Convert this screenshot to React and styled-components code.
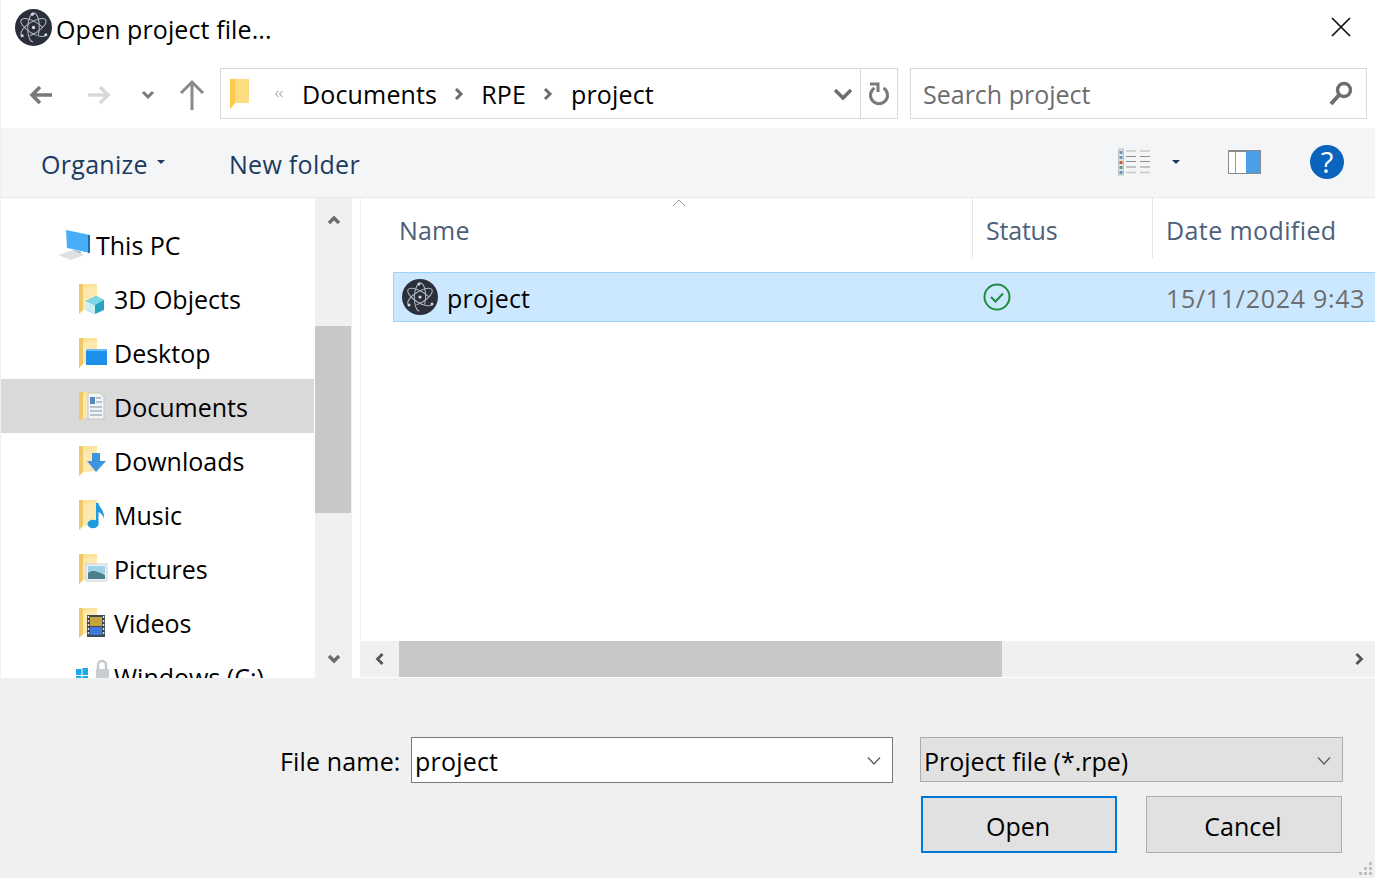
import React from "react";
import styled, { createGlobalStyle } from "styled-components";

const GlobalStyle = createGlobalStyle`
  html, body {
    margin: 0;
    padding: 0;
    background: #fff;
  }
  * {
    box-sizing: border-box;
  }
`;

const Dialog = styled.div`
  width: 1375px;
  height: 878px;
  position: relative;
  overflow: hidden;
  display: flex;
  flex-direction: column;
  background: #fff;
  color: #000;
  font-family: "Open Sans", "Noto Sans", sans-serif;
  font-size: 25px;
  border-left: 1px solid #f0f0f0;
`;

const Glyph = styled.svg`
  flex: none;
  display: block;
  margin-right: ${(p) => p.$gap || 0}px;
`;

const TitleBar = styled.div`
  height: 60px;
  flex: none;
  display: flex;
  align-items: center;
  padding: 0 24px 6px 14px;
`;

const Title = styled.div`
  margin-left: 4px;
  margin-top: 4px;
  flex: 1;
  line-height: 34px;
  letter-spacing: 0.1px;
`;

const NavBar = styled.div`
  height: 68px;
  flex: none;
  display: flex;
  align-items: flex-start;
  padding-top: 8px;
  padding-right: 8px;
`;

const NavButtons = styled.div`
  width: 219px;
  height: 53px;
  flex: none;
  display: flex;
  align-items: center;
  padding-left: 28px;
`;

const Address = styled.div`
  width: 678px;
  height: 51px;
  flex: none;
  display: flex;
  align-items: center;
  border: 1px solid #d9d9dd;
  padding-left: 8px;
`;

const Crumb = styled.span`
  line-height: 34px;
  letter-spacing: 0.15px;
`;

const CrumbSep = styled.svg`
  flex: none;
  margin: 0 ${(p) => p.$right}px 0 ${(p) => p.$left}px;
`;

const AddressEnd = styled.div`
  margin-left: auto;
  height: 100%;
  display: flex;
  align-items: center;
`;

const RefreshBox = styled.div`
  width: 37px;
  height: 100%;
  margin-left: 7px;
  border-left: 1px solid #d9d9dd;
  display: flex;
  align-items: center;
  justify-content: center;
`;

const SearchBox = styled.div`
  margin-left: 12px;
  flex: 1;
  height: 51px;
  display: flex;
  align-items: center;
  justify-content: space-between;
  border: 1px solid #d9d9dd;
  padding: 0 13px 0 12px;
  color: #6d6d6d;
`;

const CommandBar = styled.div`
  height: 70px;
  flex: none;
  display: flex;
  align-items: center;
  background: #f3f5f7;
  border-bottom: 1px solid #e8eaed;
  padding-left: 40px;
  padding-right: 31px;
  color: #1e3a5f;
`;

const CommandText = styled.span`
  line-height: 34px;
  letter-spacing: 0.3px;
  margin-top: 2px;
  margin-left: ${(p) => p.$left || 0}px;
`;

const Caret = styled.span`
  flex: none;
  width: 0;
  height: 0;
  border-left: 4px solid transparent;
  border-right: 4px solid transparent;
  border-top: 4px solid #1e3a5f;
  margin: ${(p) => p.$margin};
`;

const CommandRight = styled.div`
  margin-left: auto;
  margin-bottom: 2px;
  display: flex;
  align-items: center;
`;

const HelpButton = styled.div`
  width: 34px;
  height: 34px;
  border-radius: 50%;
  background: #0a63bd;
  color: #fff;
  font-size: 29px;
  line-height: 34px;
  text-align: center;
  margin-left: 49px;
`;

const Main = styled.div`
  height: 480px;
  flex: none;
  display: flex;
`;

const SidePane = styled.div`
  width: 313px;
  margin-right: 1px;
  flex: none;
  padding-top: 19px;
  overflow: hidden;
`;

const TreeRow = styled.div`
  height: 54px;
  flex: none;
  display: flex;
  align-items: center;
  padding-left: ${(p) => p.$indent}px;
  background: ${(p) => (p.$selected ? "#d9d9d9" : "transparent")};
`;

const TreeLabel = styled.span`
  line-height: 34px;
  margin-top: 2px;
  margin-left: ${(p) => p.$gap}px;
`;

const VScroll = styled.div`
  width: 37px;
  flex: none;
  background: #f0f0f0;
  display: flex;
  flex-direction: column;
`;

const ScrollEnd = styled.div`
  height: ${(p) => (p.$bottom ? 38 : 44)}px;
  margin-top: ${(p) => (p.$bottom ? "auto" : 0)};
  flex: none;
  display: flex;
  align-items: center;
  justify-content: center;
`;

const VThumb = styled.div`
  height: 187px;
  margin-top: 84px;
  background: #c8c8c8;
  margin-right: 1px;
`;

const ListPane = styled.div`
  flex: 1;
  min-width: 0;
  margin-left: 8px;
  border-left: 1px solid #f0f0f0;
  display: flex;
  flex-direction: column;
  position: relative;
`;

const SortMark = styled.svg`
  position: absolute;
  left: 311px;
  top: 1px;
`;

const ListHeader = styled.div`
  height: 60px;
  flex: none;
  display: grid;
  grid-template-columns: 611px 180px 1fr;
  color: #4c607a;
`;

const HeaderCell = styled.div`
  display: flex;
  align-items: center;
  padding-left: ${(p) => p.$pad}px;
  padding-top: 4px;
  border-left: ${(p) => (p.$divider ? "1px solid #e5e5e5" : "none")};
  line-height: 34px;
  letter-spacing: ${(p) => p.$spacing}px;
`;

const FileRow = styled.div`
  height: 50px;
  margin-top: 14px;
  margin-left: 32px;
  flex: none;
  display: grid;
  grid-template-columns: 580px 180px 1fr;
  align-items: center;
  background: #cce8ff;
  border: 1px solid #99d1ff;
  border-right: none;
`;

const FileName = styled.div`
  display: flex;
  align-items: center;
  padding-left: 8px;
  gap: 9px;
  letter-spacing: 0.2px;
`;

const FileNameText = styled.span`
  margin-top: 2px;
`;

const FileStatus = styled.div`
  display: flex;
  align-items: center;
  padding-left: 9px;
  margin-top: -1px;
`;

const FileDate = styled.div`
  color: #6d6d6d;
  padding-left: 12px;
  padding-top: 2px;
  white-space: nowrap;
  line-height: 34px;
  letter-spacing: 0.7px;
`;

const HScroll = styled.div`
  height: 36px;
  margin-top: auto;
  margin-bottom: 1px;
  flex: none;
  background: #f0f0f0;
  display: flex;
  align-items: stretch;
`;

const HEnd = styled.div`
  width: ${(p) => (p.$right ? 32 : 38)}px;
  flex: none;
  display: flex;
  align-items: center;
  justify-content: center;
  margin-left: ${(p) => (p.$right ? "auto" : 0)};
`;

const HThumb = styled.div`
  width: 603px;
  background: #c8c8c8;
`;

const Footer = styled.div`
  flex: 1;
  background: #f0f0f0;
  padding: 59px 33px 0 279px;
  display: grid;
  grid-template-columns: 132px 482px 28px 196px 29px 196px;
  grid-template-rows: 46px 57px;
  row-gap: 13px;
  margin-left: -1px;
`;

const FieldLabel = styled.div`
  display: flex;
  align-items: center;
  padding-top: 2px;
  line-height: 34px;
  letter-spacing: 0.15px;
  margin-left: 1px;
`;

const ComboInput = styled.div`
  display: flex;
  align-items: center;
  justify-content: space-between;
  background: #fff;
  border: 1px solid #7a7a7a;
  padding: 2px 10px 0 3px;
  line-height: 34px;
  letter-spacing: 0.2px;
`;

const TypeSelect = styled.div`
  grid-column: 4 / 7;
  margin-left: -1px;
  margin-right: -1px;
  margin-bottom: 1px;
  display: flex;
  align-items: center;
  justify-content: space-between;
  background: #e1e1e1;
  border: 1px solid #adadad;
  padding: 2px 10px 0 3px;
  line-height: 34px;
`;

const DialogButton = styled.div`
  grid-row: 2;
  grid-column: ${(p) => p.$col};
  display: flex;
  align-items: center;
  justify-content: center;
  background: #e1e1e1;
  border: ${(p) => (p.$primary ? "2px solid #0078d7" : "1px solid #adadad")};
  padding: 2px 2px 0 0;
  line-height: 34px;
`;

const Grip = styled.svg`
  position: absolute;
  right: 1px;
  bottom: 1px;
`;

const Atom = ({ size }) => (
  <Glyph width={size} height={size} viewBox="0 0 36 36">
    <circle cx="18" cy="18" r="18" fill="#2b2e3b" />
    <g fill="none" stroke="#b4bbc3" strokeWidth="1" strokeDasharray="86 14">
      <ellipse cx="18" cy="18" rx="14" ry="5.6" transform="rotate(32 18 18)" pathLength="100" />
      <ellipse cx="18" cy="18" rx="14" ry="5.6" transform="rotate(92 18 18)" pathLength="100" />
      <ellipse cx="18" cy="18" rx="14" ry="5.6" transform="rotate(148 18 18)" pathLength="100" />
    </g>
    <g fill="#d5dade">
      <circle cx="18" cy="18" r="1.6" />
      <circle cx="17" cy="5" r="1.5" />
      <circle cx="7" cy="26" r="1.5" />
      <circle cx="30" cy="25" r="1.5" />
    </g>
  </Glyph>
);

const Chevron = ({ dir = "down", color = "#6d6d6d", size = 16, weight = 3.4 }) => {
  const pts = {
    down: "3,5 8,10 13,5",
    up: "3,11 8,6 13,11",
    left: "10.5,3 5.5,8 10.5,13",
    right: "5.5,3 10.5,8 5.5,13",
  }[dir];
  return (
    <Glyph width={size} height={size} viewBox="0 0 16 16">
      <polyline points={pts} fill="none" stroke={color} strokeWidth={weight} />
    </Glyph>
  );
};

const ThinChevron = () => (
  <Glyph width="16" height="10" viewBox="0 0 16 10">
    <polyline points="2,1.5 8,8 14,1.5" fill="none" stroke="#5a5a5a" strokeWidth="1.3" />
  </Glyph>
);

const CrumbArrow = ({ left, right }) => (
  <CrumbSep width="12" height="14" viewBox="0 0 12 14" $left={left} $right={right}>
    <polyline points="3,2 8,7 3,12" fill="none" stroke="#6d6d6d" strokeWidth="3" />
  </CrumbSep>
);

// tall explorer folder, the overlay for each library is passed as children
const Folder = ({ children }) => (
  <Glyph width="31" height="34" viewBox="0 0 31 34">
    <path d="M1 3 L19 3 L19 28 L6 28 L1 33 Z" fill="#fbe29a" />
    <path d="M1 3 L5 3 L5 29 L1 33 Z" fill="#f0c869" />
    <path d="M5 8 L19 5 L19 28 L5 29 Z" fill="#fde8ad" />
    {children}
  </Glyph>
);

const treeItems = [
  {
    label: "3D Objects",
    overlay: (
      <g>
        <path d="M8 20 L18 15 L26 19 L26 29 L17 33 L8 29 Z" fill="#27a4c4" />
        <path d="M8 20 L17 24 L17 33 L8 29 Z" fill="#c8f0f0" />
        <path d="M8 20 L18 15 L26 19 L17 24 Z" fill="#7cd6e6" />
      </g>
    ),
  },
  {
    label: "Desktop",
    overlay: (
      <g>
        <rect x="8" y="14" width="21" height="16" fill="#1e90ec" />
        <rect x="8" y="14" width="21" height="2" fill="#6cbcf4" />
      </g>
    ),
  },
  {
    label: "Documents",
    selected: true,
    overlay: (
      <g>
        <path d="M10 4 L22 4 L26 8 L26 30 L10 30 Z" fill="#f2f4f6" stroke="#b8c0c8" strokeWidth="0.8" />
        <rect x="12" y="8" width="5" height="7" fill="#5587bd" />
        <path d="M18 9 h5 M18 13 h6 M12 18 h12 M12 22 h12 M12 26 h12" stroke="#7f93a8" strokeWidth="1.2" />
      </g>
    ),
  },
  {
    label: "Downloads",
    overlay: (
      <path d="M14 10 L22 10 L22 18 L28 18 L18 29 L9 18 L14 18 Z" fill="#3e94de" />
    ),
  },
  {
    label: "Music",
    overlay: (
      <g fill="#1f9be0">
        <ellipse cx="15" cy="27" rx="5.5" ry="4.2" />
        <path d="M18 6 L20.5 6 C21 11 27 13 26 22 C25 18 23 16 20.5 15 L20.5 27 L18 27 Z" />
      </g>
    ),
  },
  {
    label: "Pictures",
    overlay: (
      <g>
        <rect x="8" y="13" width="21" height="17" fill="#eef1f3" stroke="#c5ccd2" strokeWidth="0.8" />
        <rect x="10" y="15" width="17" height="8" fill="#9fd3ea" />
        <path d="M10 22 C15 18 20 21 27 24 L27 28 L10 28 Z" fill="#4f7f8a" />
      </g>
    ),
  },
  {
    label: "Videos",
    overlay: (
      <g>
        <rect x="9" y="10" width="18" height="22" fill="#3d4a52" />
        <rect x="12" y="12" width="12" height="9" fill="#c4a43c" />
        <rect x="12" y="22" width="12" height="8" fill="#3f78d8" />
        <path d="M10.5 11 v20 M25.5 11 v20" stroke="#dfe5e8" strokeWidth="1.4" strokeDasharray="2 2" />
      </g>
    ),
  },
];

const App = () => {
  return (
    <>
      <GlobalStyle />
      <Dialog>
        <TitleBar>
          <Atom size={37} />
          <Title>Open project file...</Title>
          <Glyph width="20" height="20" viewBox="0 0 20 20">
            <path d="M1 1 L19 19 M19 1 L1 19" stroke="#111" strokeWidth="1.7" />
          </Glyph>
        </TitleBar>

        <NavBar>
          <NavButtons>
            <Glyph width="24" height="20" viewBox="0 0 24 20" $gap={34}>
              <path d="M23 10 H4 M11 2 L3 10 L11 18" fill="none" stroke="#7a7a7a" strokeWidth="3.6" />
            </Glyph>
            <Glyph width="24" height="20" viewBox="0 0 24 20" $gap={29}>
              <path d="M1 10 H20 M13 2 L21 10 L13 18" fill="none" stroke="#d9d9d9" strokeWidth="3.6" />
            </Glyph>
            <Glyph width="16" height="16" viewBox="0 0 16 16" $gap={23}>
              <polyline points="3,5 8,10 13,5" fill="none" stroke="#7a7a7a" strokeWidth="3" />
            </Glyph>
            <Glyph width="26" height="32" viewBox="0 0 26 32">
              <path d="M13 31 V3 M2 14 L13 3 L24 14" fill="none" stroke="#8a8a8a" strokeWidth="3" />
            </Glyph>
          </NavButtons>

          <Address>
            <Glyph width="22" height="32" viewBox="0 0 22 32">
              <path d="M1 1 L20 1 L20 25 L6 25 L1 31 Z" fill="#fcdc80" />
              <path d="M1 1 L6 1 L6 25 L1 31 Z" fill="#ffc94d" />
            </Glyph>
            <CrumbSep width="10" height="10" viewBox="0 0 10 10" $left={23} $right={18}>
              <path d="M4.5 2 L1.5 5 L4.5 8 M8.5 2 L5.5 5 L8.5 8" fill="none" stroke="#8a8a8a" strokeWidth="1" />
            </CrumbSep>
            <Crumb>Documents</Crumb>
            <CrumbArrow left={16} right={16} />
            <Crumb>RPE</Crumb>
            <CrumbArrow left={16} right={17} />
            <Crumb>project</Crumb>
            <AddressEnd>
              <svg width="20" height="14" viewBox="0 0 20 14">
                <polyline points="2,3 10,11 18,3" fill="none" stroke="#6d6d6d" strokeWidth="3.4" />
              </svg>
              <RefreshBox>
                <svg width="22" height="24" viewBox="0 0 22 24">
                  <path d="M6.5 6 A 8.5 8.5 0 1 0 15.5 6" fill="none" stroke="#7a7a7a" strokeWidth="3" />
                  <path d="M2 2 H10 V10" fill="none" stroke="#7a7a7a" strokeWidth="3" />
                </svg>
              </RefreshBox>
            </AddressEnd>
          </Address>

          <SearchBox>
            <span>Search project</span>
            <svg width="24" height="26" viewBox="0 0 24 26">
              <circle cx="15" cy="9" r="6.5" fill="none" stroke="#6d6d6d" strokeWidth="3.4" />
              <path d="M10 14 L2 23" stroke="#6d6d6d" strokeWidth="4" />
            </svg>
          </SearchBox>
        </NavBar>

        <CommandBar>
          <CommandText>Organize</CommandText>
          <Caret $margin="-2px 0 0 9px" />
          <CommandText $left={64}>New folder</CommandText>
          <CommandRight>
            <svg width="33" height="28" viewBox="0 0 33 28">
              <rect x="0.5" y="1" width="5" height="26" fill="#dfe7ea" stroke="#b8c2c8" />
              <rect x="1.5" y="3" width="3" height="3" fill="#6c93b3" />
              <rect x="1.5" y="8" width="3" height="3" fill="#6c93b3" />
              <rect x="1.5" y="13" width="3" height="3" fill="#c9562e" />
              <rect x="1.5" y="18" width="3" height="3" fill="#5b9c7a" />
              <rect x="1.5" y="23" width="3" height="3" fill="#6c93b3" />
              <path d="M8 3 H18 M22 3 H32 M8 24.5 H18 M22 24.5 H32" stroke="#c9c9c9" strokeWidth="1.4" />
              <path d="M8 8.5 H18 M22 8.5 H32 M8 13.5 H18 M22 13.5 H32 M8 19 H18 M22 19 H32" stroke="#8f8f8f" strokeWidth="1.2" />
            </svg>
            <Caret $margin="0 48px 0 21px" />
            <svg width="33" height="24" viewBox="0 0 33 24">
              <rect x="0.5" y="0.5" width="32" height="23" fill="#fff" stroke="#8a8a8a" />
              <rect x="0" y="0" width="33" height="2" fill="#8a8a8a" />
              <rect x="7" y="1" width="1" height="22" fill="#9a9a9a" />
              <rect x="18" y="1" width="14" height="22" fill="#4a9fe8" />
            </svg>
            <HelpButton>?</HelpButton>
          </CommandRight>
        </CommandBar>

        <Main>
          <SidePane>
            <TreeRow $indent={55}>
              <Glyph width="36" height="34" viewBox="0 0 36 34">
                <path d="M10 3 L34 8 L34 26 L11 21 Z" fill="#45aef6" />
                <path d="M32 8 L34 8 L34 26 L32 26 Z" fill="#1a6fb5" />
                <path d="M18 23 L25 25 L24 28 L17 27 Z" fill="#9aa4ac" />
                <path d="M2 28 L17 23 L28 28 L15 33 Z" fill="#dde1e4" />
              </Glyph>
              <TreeLabel $gap={4}>This PC</TreeLabel>
            </TreeRow>
            {treeItems.map((item) => (
              <TreeRow key={item.label} $indent={77} $selected={item.selected}>
                <Folder>{item.overlay}</Folder>
                <TreeLabel $gap={5}>{item.label}</TreeLabel>
              </TreeRow>
            ))}
            <TreeRow $indent={74}>
              <Glyph width="34" height="34" viewBox="0 0 34 34">
                <g fill="#1fa8e6">
                  <rect x="1" y="10" width="5.5" height="6" />
                  <rect x="7.5" y="9" width="5.5" height="7" />
                  <rect x="1" y="17" width="5.5" height="6" />
                  <rect x="7.5" y="17" width="5.5" height="7" />
                </g>
                <path d="M23 10 V6 A 4 4 0 0 1 31 6 V10" fill="none" stroke="#c4c8cc" strokeWidth="2.4" />
                <rect x="21" y="10" width="13" height="18" fill="#c9cdd1" />
              </Glyph>
              <TreeLabel $gap={5}>Windows (C:)</TreeLabel>
            </TreeRow>
          </SidePane>

          <VScroll>
            <ScrollEnd>
              <Chevron dir="up" />
            </ScrollEnd>
            <VThumb />
            <ScrollEnd $bottom>
              <Chevron dir="down" />
            </ScrollEnd>
          </VScroll>

          <ListPane>
            <SortMark width="14" height="8" viewBox="0 0 14 8">
              <polyline points="1,7 7,1 13,7" fill="none" stroke="#9a9a9a" strokeWidth="1" />
            </SortMark>
            <ListHeader>
              <HeaderCell $pad={38} $spacing={0.2}>Name</HeaderCell>
              <HeaderCell $pad={13} $spacing={-0.2} $divider>Status</HeaderCell>
              <HeaderCell $pad={13} $spacing={0.4} $divider>Date modified</HeaderCell>
            </ListHeader>
            <FileRow>
              <FileName>
                <Atom size={36} />
                <FileNameText>project</FileNameText>
              </FileName>
              <FileStatus>
                <svg width="28" height="28" viewBox="0 0 28 28">
                  <circle cx="14" cy="14" r="12.5" fill="none" stroke="#1e8c3e" strokeWidth="2" />
                  <polyline points="8,14 12.5,18.5 20,10.5" fill="none" stroke="#1e8c3e" strokeWidth="2" />
                </svg>
              </FileStatus>
              <FileDate>15/11/2024 9:43</FileDate>
            </FileRow>
            <HScroll>
              <HEnd>
                <Chevron dir="left" color="#555" size={16} weight={2.8} />
              </HEnd>
              <HThumb />
              <HEnd $right>
                <Chevron dir="right" color="#555" size={16} weight={2.8} />
              </HEnd>
            </HScroll>
          </ListPane>
        </Main>

        <Footer>
          <FieldLabel>File name:</FieldLabel>
          <ComboInput>
            <span>project</span>
            <ThinChevron />
          </ComboInput>
          <TypeSelect>
            <span>Project file (*.rpe)</span>
            <ThinChevron />
          </TypeSelect>
          <DialogButton $col={4} $primary>Open</DialogButton>
          <DialogButton $col={6}>Cancel</DialogButton>
        </Footer>

        <Grip width="16" height="16" viewBox="0 0 16 16">
          <g fill="#bfbfbf">
            <rect x="11" y="1" width="3" height="3" />
            <rect x="6" y="6" width="3" height="3" />
            <rect x="11" y="6" width="3" height="3" />
            <rect x="1" y="11" width="3" height="3" />
            <rect x="6" y="11" width="3" height="3" />
            <rect x="11" y="11" width="3" height="3" />
          </g>
        </Grip>
      </Dialog>
    </>
  );
};

export default App;
